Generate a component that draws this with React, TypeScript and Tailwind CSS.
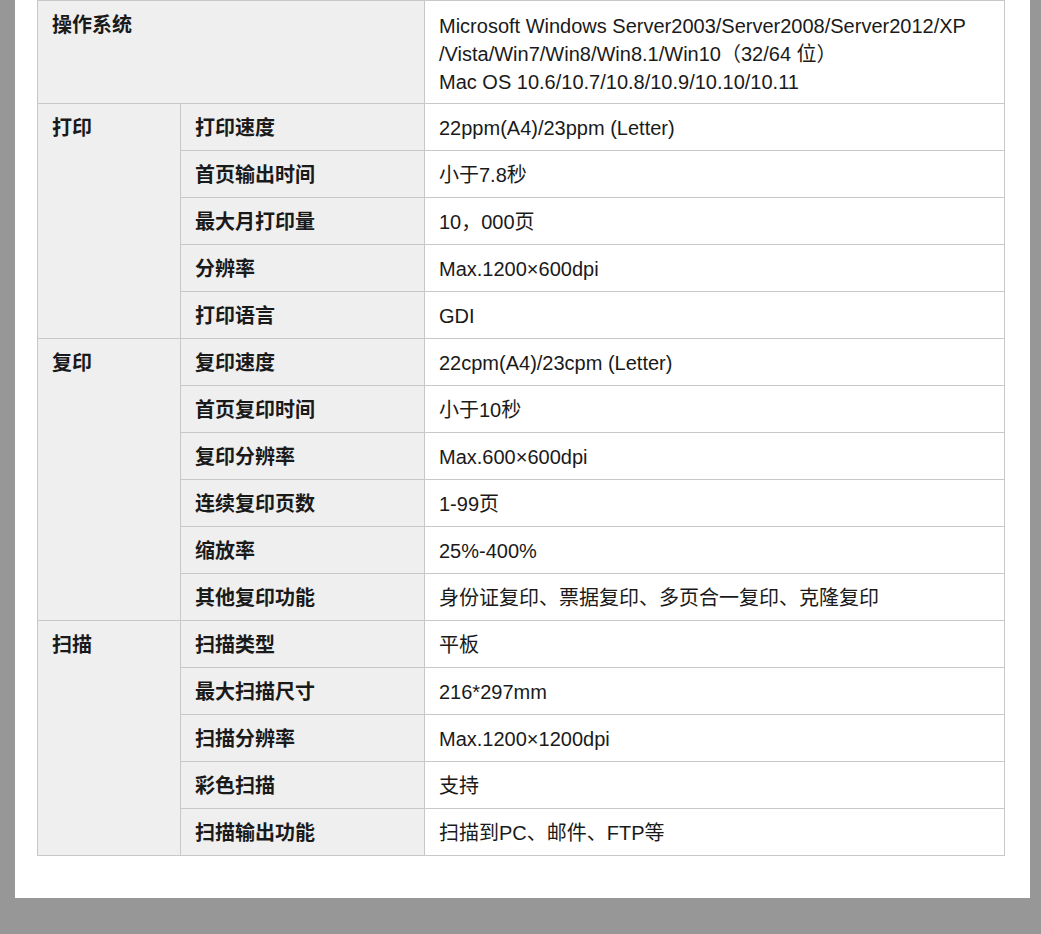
const groups: { label: string; rows: [string, string][] }[] = [
  {
    label: "打印",
    rows: [
      ["打印速度", "22ppm(A4)/23ppm (Letter)"],
      ["首页输出时间", "小于7.8秒"],
      ["最大月打印量", "10，000页"],
      ["分辨率", "Max.1200×600dpi"],
      ["打印语言", "GDI"],
    ],
  },
  {
    label: "复印",
    rows: [
      ["复印速度", "22cpm(A4)/23cpm (Letter)"],
      ["首页复印时间", "小于10秒"],
      ["复印分辨率", "Max.600×600dpi"],
      ["连续复印页数", "1-99页"],
      ["缩放率", "25%-400%"],
      ["其他复印功能", "身份证复印、票据复印、多页合一复印、克隆复印"],
    ],
  },
  {
    label: "扫描",
    rows: [
      ["扫描类型", "平板"],
      ["最大扫描尺寸", "216*297mm"],
      ["扫描分辨率", "Max.1200×1200dpi"],
      ["彩色扫描", "支持"],
      ["扫描输出功能", "扫描到PC、邮件、FTP等"],
    ],
  },
];

const cell = "border border-[#c8c8c8] px-[14px] align-top pt-[11px] text-left";

export default function App() {
  return (
    <div
      className="h-[934px] w-[1041px] bg-[#979797] text-[20px] leading-[26px] text-[#1a1a1a]"
      style={{ fontFamily: '"Liberation Sans", "Noto Sans CJK SC", sans-serif' }}
    >
      <div className="ml-[15px] w-[1015px] bg-white pl-[22px] pb-[42px]">
        <table className="w-[968px] border-collapse">
          <colgroup>
            <col className="w-[143px]" />
            <col className="w-[244px]" />
            <col />
          </colgroup>
          <tbody>
            <tr className="h-[103px]">
              <td colSpan={2} className={`${cell} bg-[#efefef] font-semibold`}>操作系统</td>
              <td className={`${cell} pt-[10px] leading-[28px]`}>
                Microsoft Windows Server2003/Server2008/Server2012/XP /Vista/Win7/Win8/Win8.1/Win10（32/64 位）
                <br />
                Mac OS 10.6/10.7/10.8/10.9/10.10/10.11
              </td>
            </tr>
            {groups.map((g) =>
              g.rows.map(([k, v], i) => (
                <tr key={g.label + k} className="h-[47px]">
                  {i === 0 && (
                    <td rowSpan={g.rows.length} className={`${cell} bg-[#efefef] font-semibold`}>
                      {g.label}
                    </td>
                  )}
                  <td className={`${cell} bg-[#efefef] font-semibold`}>{k}</td>
                  <td className={cell}>{v}</td>
                </tr>
              ))
            )}
          </tbody>
        </table>
      </div>
    </div>
  );
}
